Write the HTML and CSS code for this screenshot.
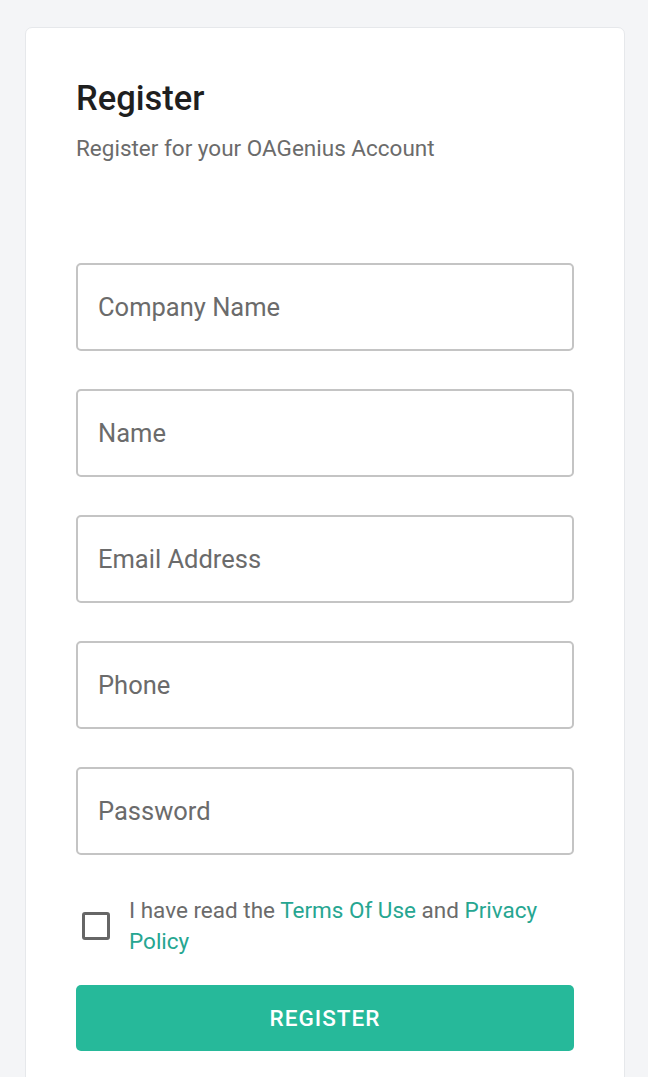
FILE: index.html
```html
<!DOCTYPE html>
<html>
<head>
<meta charset="utf-8">
<link rel="stylesheet" href="styles.css">
</head>
<body>
<div class="page">
  <div class="card">
    <h1 class="title">Register</h1>
    <p class="subtitle">Register for your OAGenius Account</p>
    <form class="form">
      <div class="field">Company Name</div>
      <div class="field">Name</div>
      <div class="field">Email Address</div>
      <div class="field">Phone</div>
      <div class="field">Password</div>
      <div class="agree">
        <span class="checkbox"></span>
        <p class="agree-text">I have read the <a class="link">Terms Of Use</a> and <a class="link">Privacy</a> <a class="link">Policy</a></p>
      </div>
      <div class="button">REGISTER</div>
    </form>
  </div>
</div>
</body>
</html>
```

FILE: styles.css
```css
html, body {
  margin: 0;
  padding: 0;
  background: #f4f5f7;
  font-family: Roboto, "Liberation Sans", sans-serif;
}
.page {
  padding: 27px 23px 0 25px;
  height: 1077px;
  box-sizing: border-box;
  overflow: hidden;
}
.card {
  background: #fff;
  border: 1px solid #e6e8eb;
  border-radius: 7px;
  padding: 49px 50px 60px 50px;
  min-height: 1100px;
  box-sizing: border-box;
}
.title {
  margin: 0;
  font-size: 34.5px;
  font-weight: 500;
  line-height: 42px;
  color: #1f1f1f;
}
.subtitle {
  margin: 14px 0 0 0;
  font-size: 22.5px;
  line-height: 30px;
  color: #6b6b6b;
}
.form {
  margin-top: 100px;
  display: flex;
  flex-direction: column;
  gap: 38px;
}
.field {
  height: 88px;
  box-sizing: border-box;
  border: 2px solid #c4c4c4;
  border-radius: 5px;
  padding-left: 20px;
  display: flex;
  align-items: center;
  font-size: 25.5px;
  color: #6b6b6b;
}
.agree {
  display: flex;
  align-items: center;
  gap: 19px;
  margin-top: 2px;
  padding-left: 6px;
}
.checkbox {
  width: 28px;
  height: 28px;
  box-sizing: border-box;
  border: 3px solid #666;
  border-radius: 3px;
  flex: none;
}
.agree-text {
  margin: 0;
  font-size: 22.5px;
  line-height: 31px;
  color: #6b6b6b;
}
.link {
  color: #26a691;
  text-decoration: none;
}
.button {
  margin-top: -10px;
  height: 66px;
  border-radius: 5px;
  background: #26b99a;
  color: #fff;
  font-size: 22.5px;
  font-weight: 500;
  letter-spacing: 1px;
  display: flex;
  align-items: center;
  justify-content: center;
}
```
